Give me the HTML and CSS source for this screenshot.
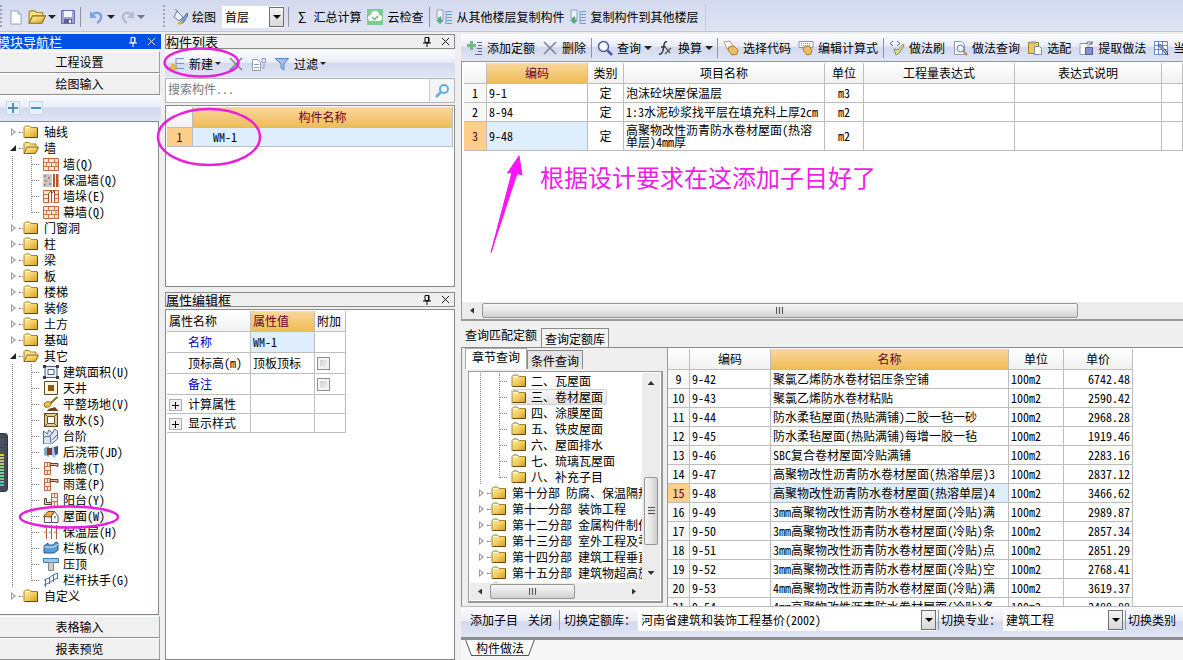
FILE: index.html
```html
<!DOCTYPE html>
<html lang="zh-CN">
<head>
<meta charset="utf-8">
<title>构件做法</title>
<link rel="stylesheet" href="styles.css">
</head>
<body>
<svg class="defs" aria-hidden="true">
  <defs>
    <linearGradient id="gold" x1="0" y1="0" x2="1" y2="1"><stop offset="0" stop-color="#fff3b0"/><stop offset=".5" stop-color="#f3cf62"/><stop offset="1" stop-color="#d49a1c"/></linearGradient>
    <linearGradient id="steel" x1="0" y1="0" x2="1" y2="1"><stop offset="0" stop-color="#fff"/><stop offset="1" stop-color="#7fa6d8"/></linearGradient>
  </defs>
  <symbol id="folder" viewBox="0 0 16 16"><path d="M1 3.500 2.500 2h4L8 3.500h6.500V13.500H1z" fill="url(#gold)" stroke="#a8842c"/><path d="M14.500 4v9.500H2" fill="none" stroke="#5e4a1c"/><path d="M3 3.500h4" stroke="#fff"/></symbol>
  <symbol id="folder-open" viewBox="0 0 16 16"><path d="M1 13V3.500L2 2.500h4L7.500 4H13v3" fill="#f9e08a" stroke="#a8842c"/><path d="M1 13.500 4 7h11.500L12.500 13.500z" fill="url(#gold)" stroke="#8a6a1a"/></symbol>
  <symbol id="brick" viewBox="0 0 16 16"><path d="M.5 2.500h15v12H.5z" fill="#fbe8dc" stroke="#c0673f"/><path d="M1 6.500h14M1 10.500h14M5.500 3v3.500M11.500 3v3.500M8.500 7v3.500M3.500 7v3.500M13 7v3.500M5.500 11v3.500M11.500 11v3.500" stroke="#c8764e" fill="none"/></symbol>
  <symbol id="brick-ins" viewBox="0 0 16 16"><path d="M0 2h9v13H0z" fill="#c9c4c8"/><path d="M1 3h2v2H1zm4 2h2v2H5zM2 8h2v2H2zm4 3h2v2H6zM1 12h2v2H1z" fill="#b8837c"/><path d="M10 2h2v13h-2zM13 2h2.500v13H13z" fill="#b8532b"/></symbol>
  <symbol id="brick-pier" viewBox="0 0 16 16"><path d="M.5 2.500h15v12H.5z" fill="#fbe8dc" stroke="#c0673f"/><path d="M1 6.500h4M1 10.500h4M12 6.500h3M12 10.500h3" stroke="#c8764e"/><path d="M5.500 14.500v-9l3-3v12M8.500 14.500v-9l3-3v12" fill="#fff" stroke="#a84a28"/></symbol>
  <symbol id="area" viewBox="0 0 16 16"><path d="M2 2.500h12v11H2z" fill="#e8effa" stroke="#4a5a78"/><path d="M5 5.500h6v5H5z" fill="#fff" stroke="#4a5a78"/><path d="M0 1h3v3H0zm13 0h3v3h-3zM0 12h3v3H0zm13 0h3v3h-3z" fill="#333b4c"/></symbol>
  <symbol id="court" viewBox="0 0 16 16"><path d="M1.500 1.500h13v13h-13z" fill="#fff5dc" stroke="#5c4a30"/><path d="M5 5h6v6H5z" fill="#8a5a12"/></symbol>
  <symbol id="shovel" viewBox="0 0 16 16"><path d="M14.500 1 7 7.500" stroke="#8a6a1a" stroke-width="2"/><path d="M1 8c2-3 5-3 7-1 1 3-3 5-6 4z" fill="#f0c24c" stroke="#8a6a1a"/><path d="M4 15c2-4 6-2 7-4 2 0 3 3 5 4z" fill="#6b3f1c"/></symbol>
  <symbol id="apron" viewBox="0 0 16 16"><path d="M1.500 1.500h13v13h-13z" fill="#e5c98e" stroke="#6b4a1e"/><path d="M4.500 4.500h7v7h-7z" fill="#fff" stroke="#6b4a1e"/><path d="m1 1 3 3M15 1l-3 3M1 15l3-3M15 15l-3-3" stroke="#6b4a1e"/></symbol>
  <symbol id="steps" viewBox="0 0 16 16"><path d="m.5 3 4 3 1-4 4 3 2-4 3 2v8l-6 5H.5z" fill="#dbe6f4" stroke="#5b7190"/><path d="m1 9 6-1 1 7M7 8l3-4M9 12l5-5" fill="none" stroke="#5b7190"/></symbol>
  <symbol id="strip" viewBox="0 0 16 16"><path d="m1 4 5-2v11l-5-2z" fill="#8fa6c0"/><path d="M8 3h7v7l-4 4-3-3z" fill="#a9c9e8"/><path d="M4 4h5v7H4z" fill="#7a3a34"/><path d="m11 3 4-1v8l-3 1z" fill="#3f4f86"/></symbol>
  <symbol id="eave" viewBox="0 0 16 16"><path d="M1.500 2.500h6v12h-6z" fill="#fbe8dc" stroke="#c0673f"/><path d="M1 6.500h6M1 10.500h6M4.500 3v3.500M4.500 11v3.500" stroke="#c8764e"/><path d="M7 3.500h8v3l-3-1H7z" fill="#d9c2ae" stroke="#5a4030"/></symbol>
  <symbol id="balcony" viewBox="0 0 16 16"><path d="M8.500 1.500h6v13h-6z" fill="#fbe8dc" stroke="#c0673f"/><path d="M9 5.500h6M9 9.500h6M11.500 2v3.500M11.500 10v4" stroke="#c8764e"/><path d="M1.500 6.500h2v4h5v2h-7z" fill="#e6cdb8" stroke="#5a4030"/></symbol>
  <symbol id="roof" viewBox="0 0 16 16"><path d="M.5 8.500 5 3.500h6.500L8 9z" fill="#f2a93b" stroke="#7a4a12"/><path d="M11.500 3.500 15 8v6.500H8.500V8z" fill="#fff" stroke="#555"/><path d="M1.500 9v5.500h7" fill="#fff" stroke="#555"/><path d="M12 8v2" stroke="#333"/></symbol>
  <symbol id="insul" viewBox="0 0 16 16"><path d="M3.500 1v14M8.500 1v14M13.500 1v14" stroke="#a8583a"/><path d="m1 4 3-2M1 9l3-2M6 4l3-2M6 9l3-2m2-3 3-2m-3 7 3-2" stroke="#e0653a"/></symbol>
  <symbol id="board" viewBox="0 0 16 16"><path d="m1 6 4-3v2h5l3-3 2 1v7l-4 3H1z" fill="#5b9bd8" stroke="#235a94"/><path d="M1 7h10l4-3" fill="none" stroke="#d8ebfa"/></symbol>
  <symbol id="coping" viewBox="0 0 16 16"><path d="M.5 2.500h15v4H.5z" fill="#9cc8ec" stroke="#3d7fb5"/><path d="M5.500 6.500h5v8h-5z" fill="#ccc" stroke="#888"/></symbol>
  <symbol id="rail" viewBox="0 0 16 16"><path d="m1 8 5-2 4-3 5-2M1 13l5-2 4-3 5-2M2.500 7v8M6.500 5v7M10.500 3v7M14.500 1v6" fill="none" stroke="#2f78c2"/></symbol>
  <symbol id="pin" viewBox="0 0 10 12"><path d="M3 1.500h4v5H3zM1 7h8M5 7v4M6.500 2v5" fill="none" stroke="currentColor"/></symbol>
  <symbol id="close" viewBox="0 0 10 10"><path d="m1 1 8 8M9 1 1 9" stroke="currentColor" fill="none"/></symbol>
  <symbol id="page" viewBox="0 0 16 16"><path d="M3 2h7l3 3v10H3z" fill="#fff" stroke="#97a4bb"/><path d="M10 2v3h3" fill="#dde4f0" stroke="#97a4bb"/></symbol>
  <symbol id="save" viewBox="0 0 16 16"><path d="M1.500 1.500h13v13h-13z" fill="#9fa3dc" stroke="#6a6db0"/><path d="M4 2h8v6H4z" fill="#f2f4ff"/><path d="M4 10h8v4H4z" fill="#5c6198"/><path d="M9 11h2v3H9z" fill="#fff"/></symbol>
  <symbol id="undo" viewBox="0 0 16 16"><path d="M3 6c4-4 10-2 9 3-.5 2-2 4-4 5" fill="none" stroke="currentColor" stroke-width="2.500"/><path d="M1 2v7h7z" fill="currentColor"/></symbol>
  <symbol id="brush" viewBox="0 0 16 16"><path d="m5 2 6 6-4 4-5-4z" fill="#eef3fb" stroke="#6f86aa"/><path d="M3 1c0-1 3 0 3 3" fill="none" stroke="#6f86aa"/><path d="m15 4-6 8-2 3 4-1 5-8z" fill="#7fa8e0" stroke="#48699c"/><path d="m5 14 5-2 1 2-4 2z" fill="#e2b23c"/></symbol>
  <symbol id="cloud" viewBox="0 0 16 16"><path d="M0 0h16v16H0z" fill="#7ccb94"/><path d="M4 12a3 3 0 0 1 0-6 4 4 0 0 1 8 0 3 3 0 0 1 0 6z" fill="#fff"/><path d="m5 8 2.500 2.500L11 7" fill="none" stroke="#5fb77c" stroke-width="1.500"/></symbol>
  <symbol id="floors" viewBox="0 0 16 16"><path d="M1 1h6v9H1z" fill="#eef1f6" stroke="#8fa0b8"/><path d="M10 2v13M10.500 2.500H16M10.500 5.500H16M10.500 8.500H16M10.500 11.500H16M10.500 14.500H16" stroke="#6f9ad0"/><path d="M5 7v4h3l-4 4-4-4h2V9z" fill="#58a878"/></symbol>
  <symbol id="addlist" viewBox="0 0 16 16"><path d="M3 1h3v3h3v3H6v3H3V7H0V4h3z" fill="#76b982"/><path d="M10 2.500h5M11 5.500h4M10 8.500h5M11 11.500h4M8 14.500h7" stroke="#596b86"/></symbol>
  <symbol id="newlist" viewBox="0 0 16 16"><path d="M7 2v12M7 2.500h8M7 7.500h8M7 12.500h8" stroke="#7896c4"/><path d="M3 8h2v3h3v2H5v3H3v-3H0v-2h3z" fill="#f4c534" stroke="#b98b18" stroke-width=".5"/></symbol>
  <symbol id="cross" viewBox="0 0 16 16"><path d="m2 2 12 12M14 2 2 14" stroke="#7d838e" stroke-width="1.500"/></symbol>
  <symbol id="copy" viewBox="0 0 16 16"><path d="M1.500 3.500h5l3 3v8h-8z" fill="#fff" stroke="#8b9ab2"/><path d="M3 8.500h5M3 11.500h5M11 2.500h3.500v4H11zM13 8v4h-2" fill="none" stroke="#8b9ab2"/></symbol>
  <symbol id="funnel" viewBox="0 0 16 16"><path d="M1.500 2.500h13L10 8v6l-3-2V8z" fill="#9cc0ec" stroke="#5585c2"/></symbol>
  <symbol id="lens" viewBox="0 0 16 16"><circle cx="6.500" cy="6.500" r="5" fill="#f6faff" stroke="#4a5aa0" stroke-width="1.500"/><path d="m10.500 10.500 4.500 4.500" stroke="#4a5aa0" stroke-width="2.500"/></symbol>
  <symbol id="find" viewBox="0 0 16 16"><circle cx="10" cy="6" r="4" fill="none" stroke="#62aee0" stroke-width="2"/><path d="m7 9-5 5" stroke="#62aee0" stroke-width="2.500"/></symbol>
  <symbol id="fx" viewBox="0 0 16 16"><path d="M9 2C6 1 6 5 5.500 8S4 15 1 14M3 7h5" fill="none" stroke="#333" stroke-width="1.500"/><path d="m8 8 4 5M13 8l-6 6" stroke="#555" stroke-width="1.300"/></symbol>
  <symbol id="hand" viewBox="0 0 16 16"><path d="m1 2 6-1 3 5-6 3z" fill="#fff" stroke="#c98d7c"/><path d="m6 7 5-1 4 4-1 4-5 1-4-5z" fill="#eebf6a" stroke="#a97a2c"/></symbol>
  <symbol id="calc" viewBox="0 0 16 16"><path d="M1 1.500h14v6H1z" fill="#fff" stroke="#8c93a2"/><path d="M3 3.500h10M3 5.500h10" stroke="#8c93a2" stroke-dasharray="1 1"/><path d="m6 7 5-1 3 4-1 4-4 1-4-5z" fill="#eebf6a" stroke="#a97a2c"/></symbol>
  <symbol id="codebrush" viewBox="0 0 16 16"><path d="M4 1 1 3.500 4 6M8 1l3 2.500L8 6" fill="none" stroke="#56647e"/><path d="m5 9 4 1 5-6 1 2-5 7-3 2z" fill="#e2df9a" stroke="#8b8d54"/></symbol>
  <symbol id="pagefind" viewBox="0 0 16 16"><path d="M2.500 1.500h7l3 3v10h-10z" fill="#fff" stroke="#8b9ab2"/><circle cx="8.500" cy="8.500" r="3.500" fill="#e6f2fc" stroke="#5f7fae"/><path d="m11 11 4 4" stroke="#c28a3a" stroke-width="2"/></symbol>
  <symbol id="paste" viewBox="0 0 16 16"><path d="M1.500 2.500h10v11h-10z" fill="#f0c862" stroke="#a07a28"/><path d="M4 1h5v3H4z" fill="#a9b0bd"/><path d="M7.500 6.500h5l2 2v6h-7z" fill="#fff" stroke="#7d8ea8"/></symbol>
  <symbol id="extract" viewBox="0 0 16 16"><path d="M2 3.500h8v11H2z" fill="#fff" stroke="#8b9ab2"/><path d="M7.500 7.500h7v7h-7z" fill="#8a8fd0" stroke="#55589c"/><path d="M8 4c1-3 4-3 6 0M14 1v3h-3" fill="none" stroke="#4c5a80"/></symbol>
  <symbol id="gridpen" viewBox="0 0 16 16"><path d="M1.500 1.500h13v13h-13zM1 5.500h13M1 9.500h13M5.500 1v13M9.500 1v13" fill="#fff" stroke="#6c88c4"/><path d="m5 5 8 9 2 1-1-3-7-8z" fill="#9fb3dc" stroke="#46598c"/></symbol>
</svg>

<div class="app">
  <header class="bar bar--top">
    <span class="grip"></span>
    <button class="tool tool--icon" aria-label="新建文件"><svg class="ico"><use href="#page"/></svg></button>
    <button class="tool tool--icon" aria-label="打开"><svg class="ico ico--lg"><use href="#folder-open"/></svg><i class="caret"></i></button>
    <button class="tool tool--icon" aria-label="保存"><svg class="ico"><use href="#save"/></svg></button>
    <span class="sep"></span>
    <button class="tool tool--icon tool--undo" aria-label="撤销"><svg class="ico"><use href="#undo"/></svg><i class="caret"></i></button>
    <button class="tool tool--icon tool--redo" aria-label="重做"><svg class="ico flip"><use href="#undo"/></svg><i class="caret"></i></button>
    <span class="grip grip--mid"></span>
    <button class="tool"><svg class="ico"><use href="#brush"/></svg>绘图</button>
    <span class="combo combo--floor"><select aria-label="楼层"><option>首层</option></select></span>
    <span class="sep"></span>
    <button class="tool"><span class="sigma">Σ</span>汇总计算</button>
    <button class="tool"><svg class="ico"><use href="#cloud"/></svg>云检查</button>
    <span class="sep"></span>
    <button class="tool"><svg class="ico"><use href="#floors"/></svg>从其他楼层复制构件</button>
    <button class="tool"><svg class="ico"><use href="#floors"/></svg>复制构件到其他楼层</button>
    <span class="bar-end"></span>
  </header>

  <div class="work">
    <nav class="nav">
      <h2 class="title title--active"><span>模块导航栏</span><svg class="pin"><use href="#pin"/></svg><svg class="x"><use href="#close"/></svg></h2>
      <button class="section">工程设置</button>
      <button class="section">绘图输入</button>
      <div class="bar bar--nav"><button class="sq plus" aria-label="展开"></button><button class="sq" aria-label="折叠"></button></div>
      <ul class="tree tree--nav">
        <li class="shut"><span class="row"><svg class="ico"><use href="#folder"/></svg>轴线</span></li>
        <li class="open"><span class="row"><svg class="ico"><use href="#folder-open"/></svg>墙</span>
          <ul class="kids">
            <li><svg class="ico"><use href="#brick"/></svg>墙(Q)</li>
            <li><svg class="ico"><use href="#brick-ins"/></svg>保温墙(Q)</li>
            <li><svg class="ico"><use href="#brick-pier"/></svg>墙垛(E)</li>
            <li><svg class="ico"><use href="#brick"/></svg>幕墙(Q)</li>
          </ul></li>
        <li class="shut"><span class="row"><svg class="ico"><use href="#folder"/></svg>门窗洞</span></li>
        <li class="shut"><span class="row"><svg class="ico"><use href="#folder"/></svg>柱</span></li>
        <li class="shut"><span class="row"><svg class="ico"><use href="#folder"/></svg>梁</span></li>
        <li class="shut"><span class="row"><svg class="ico"><use href="#folder"/></svg>板</span></li>
        <li class="shut"><span class="row"><svg class="ico"><use href="#folder"/></svg>楼梯</span></li>
        <li class="shut"><span class="row"><svg class="ico"><use href="#folder"/></svg>装修</span></li>
        <li class="shut"><span class="row"><svg class="ico"><use href="#folder"/></svg>土方</span></li>
        <li class="shut"><span class="row"><svg class="ico"><use href="#folder"/></svg>基础</span></li>
        <li class="open"><span class="row"><svg class="ico"><use href="#folder-open"/></svg>其它</span>
          <ul class="kids">
            <li><svg class="ico"><use href="#area"/></svg>建筑面积(U)</li>
            <li><svg class="ico"><use href="#court"/></svg>天井</li>
            <li><svg class="ico"><use href="#shovel"/></svg>平整场地(V)</li>
            <li><svg class="ico"><use href="#apron"/></svg>散水(S)</li>
            <li><svg class="ico"><use href="#steps"/></svg>台阶</li>
            <li><svg class="ico"><use href="#strip"/></svg>后浇带(JD)</li>
            <li><svg class="ico"><use href="#eave"/></svg>挑檐(T)</li>
            <li><svg class="ico"><use href="#eave"/></svg>雨蓬(P)</li>
            <li><svg class="ico"><use href="#balcony"/></svg>阳台(Y)</li>
            <li><span class="picked"><svg class="ico"><use href="#roof"/></svg>屋面(W)</span></li>
            <li><svg class="ico"><use href="#insul"/></svg>保温层(H)</li>
            <li><svg class="ico"><use href="#board"/></svg>栏板(K)</li>
            <li><svg class="ico"><use href="#coping"/></svg>压顶</li>
            <li><svg class="ico"><use href="#rail"/></svg>栏杆扶手(G)</li>
          </ul></li>
        <li class="shut"><span class="row"><svg class="ico"><use href="#folder"/></svg>自定义</span></li>
      </ul>
      <button class="section">表格输入</button>
      <button class="section">报表预览</button>
    </nav>

    <section class="middle">
      <div class="pane pane--list">
        <h2 class="title"><span>构件列表</span><svg class="pin"><use href="#pin"/></svg><svg class="x"><use href="#close"/></svg></h2>
        <div class="bar bar--list">
          <button class="tool"><svg class="ico"><use href="#newlist"/></svg>新建<i class="caret caret--sm"></i></button>
          <button class="tool tool--icon" aria-label="删除构件"><svg class="ico"><use href="#cross"/></svg></button>
          <button class="tool tool--icon" aria-label="复制构件"><svg class="ico"><use href="#copy"/></svg></button>
          <button class="tool"><svg class="ico"><use href="#funnel"/></svg>过滤<i class="caret caret--sm"></i></button>
        </div>
        <div class="search"><input type="text" placeholder="搜索构件..." aria-label="搜索构件"><button aria-label="搜索"><svg class="ico"><use href="#find"/></svg></button></div>
        <div class="box">
          <table class="grid grid--list">
            <colgroup><col class="w26"><col></colgroup>
            <tr><th></th><th class="hot">构件名称</th></tr>
            <tr><th class="mark">1</th><td class="sel indent">WM-1</td></tr>
          </table>
        </div>
      </div>
      <div class="pane pane--props">
        <h2 class="title"><span>属性编辑框</span><svg class="pin"><use href="#pin"/></svg><svg class="x"><use href="#close"/></svg></h2>
        <div class="box">
          <table class="grid grid--props">
            <colgroup><col class="w84"><col class="w64"><col class="w31"></colgroup>
            <tr><th>属性名称</th><th class="hot">属性值</th><th>附加</th></tr>
            <tr class="tall"><td class="key link">名称</td><td class="sel">WM-1</td><td></td></tr>
            <tr class="tall"><td class="key">顶标高(m)</td><td>顶板顶标</td><td><input type="checkbox" aria-label="顶标高附加"></td></tr>
            <tr class="tall"><td class="key link">备注</td><td></td><td><input type="checkbox" aria-label="备注附加"></td></tr>
            <tr><td><button class="expand" aria-label="展开计算属性"></button>计算属性</td><td></td><td></td></tr>
            <tr><td><button class="expand" aria-label="展开显示样式"></button>显示样式</td><td></td><td></td></tr>
          </table>
        </div>
      </div>
    </section>

    <main class="main">
      <section class="upper">
        <div class="bar bar--main">
          <button class="tool"><svg class="ico"><use href="#addlist"/></svg>添加定额</button>
          <button class="tool"><svg class="ico"><use href="#cross"/></svg>删除</button>
          <span class="sep"></span>
          <button class="tool"><svg class="ico"><use href="#lens"/></svg>查询<i class="caret"></i></button>
          <button class="tool"><svg class="ico"><use href="#fx"/></svg>换算<i class="caret"></i></button>
          <span class="sep"></span>
          <button class="tool"><svg class="ico"><use href="#hand"/></svg>选择代码</button>
          <button class="tool"><svg class="ico"><use href="#calc"/></svg>编辑计算式</button>
          <span class="sep"></span>
          <button class="tool"><svg class="ico"><use href="#codebrush"/></svg>做法刷</button>
          <button class="tool"><svg class="ico"><use href="#pagefind"/></svg>做法查询</button>
          <button class="tool"><svg class="ico"><use href="#paste"/></svg>选配</button>
          <button class="tool"><svg class="ico"><use href="#extract"/></svg>提取做法</button>
          <button class="tool"><svg class="ico"><use href="#gridpen"/></svg>当</button>
        </div>
        <div class="sheet">
          <table class="grid grid--quota">
            <colgroup><col class="w23"><col class="w101"><col class="w36"><col class="w201"><col class="w39"><col class="w151"><col class="w147"><col></colgroup>
            <tr><th></th><th class="hot">编码</th><th>类别</th><th>项目名称</th><th>单位</th><th>工程量表达式</th><th>表达式说明</th><th></th></tr>
            <tr><th class="num">1</th><td>9-1</td><td class="mid">定</td><td>泡沫砼块屋保温层</td><td class="mid">m3</td><td></td><td></td><td></td></tr>
            <tr><th class="num">2</th><td>8-94</td><td class="mid">定</td><td>1:3水泥砂浆找平层在填充料上厚2cm</td><td class="mid">m2</td><td></td><td></td><td></td></tr>
            <tr class="double"><th class="mark">3</th><td class="sel">9-48</td><td class="mid">定</td><td class="wrap">高聚物改性沥青防水卷材屋面(热溶<br>单层)4mm厚</td><td class="mid">m2</td><td></td><td></td><td></td></tr>
          </table>
        </div>
        <div class="hscroll"><i class="arrow arrow--l"></i><div class="lane"><div class="thumb thumb--wide"></div></div></div>
      </section>

      <section class="lower">
        <div class="tabs tabs--outer"><button class="tab tab--on">查询匹配定额</button><button class="tab">查询定额库</button></div>
        <div class="query">
          <div class="chapters">
            <div class="tabs tabs--inner"><button class="tab tab--on">章节查询</button><button class="tab">条件查询</button></div>
            <div class="treebox">
              <div class="view">
                <ul class="tree tree--chapters">
                  <li class="open"><ul class="kids">
                    <li><svg class="ico"><use href="#folder"/></svg>二、瓦屋面</li>
                    <li><span class="picked picked--strong"><svg class="ico"><use href="#folder"/></svg>三、卷材屋面</span></li>
                    <li><svg class="ico"><use href="#folder"/></svg>四、涂膜屋面</li>
                    <li><svg class="ico"><use href="#folder"/></svg>五、铁皮屋面</li>
                    <li><svg class="ico"><use href="#folder"/></svg>六、屋面排水</li>
                    <li><svg class="ico"><use href="#folder"/></svg>七、琉璃瓦屋面</li>
                    <li><svg class="ico"><use href="#folder"/></svg>八、补充子目</li>
                  </ul></li>
                  <li class="shut"><span class="row"><svg class="ico"><use href="#folder"/></svg>第十分部 防腐、保温隔热</span></li>
                  <li class="shut"><span class="row"><svg class="ico"><use href="#folder"/></svg>第十一分部 装饰工程</span></li>
                  <li class="shut"><span class="row"><svg class="ico"><use href="#folder"/></svg>第十二分部 金属构件制作</span></li>
                  <li class="shut"><span class="row"><svg class="ico"><use href="#folder"/></svg>第十三分部 室外工程及零</span></li>
                  <li class="shut"><span class="row"><svg class="ico"><use href="#folder"/></svg>第十四分部 建筑工程垂直</span></li>
                  <li class="shut"><span class="row"><svg class="ico"><use href="#folder"/></svg>第十五分部 建筑物超高施</span></li>
                  <li class="shut"><span class="row"><svg class="ico"><use href="#folder"/></svg>第十六分部 其他措施项目</span></li>
                </ul>
                <div class="vscroll"><i class="arrow arrow--u"></i><div class="lane"><div class="thumb"></div></div><i class="arrow arrow--d"></i></div>
              </div>
              <div class="hscroll hscroll--tree"><i class="arrow arrow--l"></i><div class="lane"><div class="thumb"></div></div><i class="arrow arrow--r"></i></div>
            </div>
          </div>
          <div class="results">
            <table class="grid grid--results">
              <colgroup><col class="w22"><col class="w81"><col class="w238"><col class="w55"><col class="w69"></colgroup>
              <tr><th></th><th>编码</th><th class="hot">名称</th><th>单位</th><th>单价</th></tr>
              <tr><th class="num">9</th><td>9-42</td><td>聚氯乙烯防水卷材铝压条空铺</td><td>100m2</td><td class="money">6742.48</td></tr>
              <tr><th class="num">10</th><td>9-43</td><td>聚氯乙烯防水卷材粘贴</td><td>100m2</td><td class="money">2590.42</td></tr>
              <tr><th class="num">11</th><td>9-44</td><td>防水柔毡屋面(热贴满铺)二胶一毡一砂</td><td>100m2</td><td class="money">2968.28</td></tr>
              <tr><th class="num">12</th><td>9-45</td><td>防水柔毡屋面(热贴满铺)每增一胶一毡</td><td>100m2</td><td class="money">1919.46</td></tr>
              <tr><th class="num">13</th><td>9-46</td><td>SBC复合卷材屋面冷贴满铺</td><td>100m2</td><td class="money">2283.16</td></tr>
              <tr><th class="num">14</th><td>9-47</td><td>高聚物改性沥青防水卷材屋面(热溶单层)3</td><td>100m2</td><td class="money">2837.12</td></tr>
              <tr><th class="mark">15</th><td>9-48</td><td class="sel">高聚物改性沥青防水卷材屋面(热溶单层)4</td><td>100m2</td><td class="money">3466.62</td></tr>
              <tr><th class="num">16</th><td>9-49</td><td>3mm高聚物改性沥青防水卷材屋面(冷贴)满</td><td>100m2</td><td class="money">2989.87</td></tr>
              <tr><th class="num">17</th><td>9-50</td><td>3mm高聚物改性沥青防水卷材屋面(冷贴)条</td><td>100m2</td><td class="money">2857.34</td></tr>
              <tr><th class="num">18</th><td>9-51</td><td>3mm高聚物改性沥青防水卷材屋面(冷贴)点</td><td>100m2</td><td class="money">2851.29</td></tr>
              <tr><th class="num">19</th><td>9-52</td><td>3mm高聚物改性沥青防水卷材屋面(冷贴)空</td><td>100m2</td><td class="money">2768.41</td></tr>
              <tr><th class="num">20</th><td>9-53</td><td>4mm高聚物改性沥青防水卷材屋面(冷贴)满</td><td>100m2</td><td class="money">3619.37</td></tr>
              <tr><th class="num">21</th><td>9-54</td><td>4mm高聚物改性沥青防水卷材屋面(冷贴)条</td><td>100m2</td><td class="money">3488.88</td></tr>
            </table>
          </div>
        </div>
        <div class="bar bar--query">
          <button class="tool">添加子目</button>
          <button class="tool">关闭</button>
          <span class="sep"></span>
          <label for="library">切换定额库：</label>
          <span class="combo combo--library"><select id="library"><option>河南省建筑和装饰工程基价(2002)</option></select></span>
          <span class="sep"></span>
          <label for="trade">切换专业：</label>
          <span class="combo combo--trade"><select id="trade"><option>建筑工程</option></select></span>
          <span class="sep"></span>
          <span>切换类别</span>
        </div>
      </section>
      <footer class="foot"><button class="sheet-tab">构件做法</button></footer>
    </main>
  </div>

  <div class="meter"></div>
  <svg class="marks" width="1183" height="660" aria-hidden="true">
    <g fill="none" stroke="#e81fdc" stroke-width="2.500">
      <ellipse cx="201.500" cy="62.500" rx="37" ry="14"/>
      <ellipse cx="209" cy="137" rx="51" ry="28"/>
      <ellipse cx="69" cy="517" rx="49" ry="10.500"/>
    </g>
    <path d="M519 156 522 175 517 173.500 491 252.500 512 172.500 507.500 173z" fill="#fa14fa" stroke="#fa14fa" stroke-linejoin="round"/>
  </svg>
  <p class="note">根据设计要求在这添加子目好了</p>
</div>
</body>
</html>
```
FILE: styles.css
```css
* { box-sizing: border-box; }

body {
  margin: 0;
  background: #efefef;
  color: #000;
  font: 12px/16px "Noto Sans Mono CJK SC", "Noto Sans CJK SC", sans-serif;
}

button, input, select { font: inherit; color: inherit; margin: 0; padding: 0; border: 0; background: none; }
ul { list-style: none; margin: 0; padding: 0; }
.defs { position: absolute; width: 0; height: 0; }

.app { position: relative; display: flex; flex-direction: column; height: 100vh; overflow: hidden; }
.ico { width: 16px; height: 16px; flex: none; }
.ico--lg { width: 18px; height: 18px; }
.flip { transform: scaleX(-1); }

/* toolbars */
.bar {
  display: flex;
  flex: none;
  align-items: center;
  gap: 7px;
  overflow: hidden;
  white-space: nowrap;
  background: linear-gradient(#fdfdff, #e9edf8 45%, #d3daee 50%, #dfe5f5);
}
.bar--top { height: 32px; gap: 6px; padding-top: 3px; background: linear-gradient(#d3daee, #e0e4f3); border-bottom: 1px solid #c3c5cc; }
.tool { display: flex; align-items: center; gap: 4px; flex: none; }
.bar--top .tool--icon { gap: 2px; margin-right: -2px; }
.tool--undo { color: #7da3dc; margin-left: 2px; }
.tool--redo { color: #b4bccd; }
.caret { border: 4px solid transparent; border-top-color: #222; border-bottom: 0; }
.caret--sm { border-width: 3px 3px 0; margin-left: -2px; }
.tool--redo .caret { border-top-color: #777; }
.sep { width: 1px; height: 20px; flex: none; background: #8e94a5; }
.grip { width: 2px; height: 24px; flex: none; background: repeating-linear-gradient(#9da4b8 0 2px, transparent 2px 4px); }
.grip--mid { margin: 0 1px 0 14px; }
.bar-end { width: 1px; height: 26px; background: #c6cad8; }
.sigma { font-size: 14px; padding: 0 3px; }

.combo { position: relative; display: flex; height: 22px; background: #fff; flex: none; }
.combo select { appearance: none; width: 100%; padding: 0 16px 0 3px; outline: 0; }
.combo::before { content: ""; position: absolute; right: 0; top: 1px; bottom: 1px; width: 13px; border: 1px solid #707070; background: linear-gradient(#f4f4f4, #d8d8d8); pointer-events: none; }
.combo::after { content: ""; position: absolute; right: 3px; top: 9px; border: 4px solid transparent; border-top-color: #000; border-bottom: 0; pointer-events: none; }
.combo--floor { width: 62px; }
.combo--floor + .sep { margin-left: -2px; }
.combo--library { width: 298px; }
.combo--trade { width: 120px; }

/* three columns */
.work { display: flex; flex: 1; min-height: 0; padding-top: 2px; gap: 4px; }
.nav { display: flex; flex-direction: column; width: 161px; flex: none; background: #efefef; }
.middle { display: flex; flex-direction: column; gap: 5px; width: 290px; flex: none; }
.main { display: flex; flex-direction: column; flex: 1; min-width: 0; margin-left: 2px; }

.title {
  display: flex;
  flex: none;
  align-items: center;
  height: 15px;
  margin: 0;
  padding-right: 4px;
  border: 1px solid #8a8a8a;
  font-size: 13px;
  font-weight: 400;
  line-height: 15px;
}
.title span { flex: 1; white-space: nowrap; }
.title .pin { width: 10px; height: 12px; margin-right: 9px; }
.title .x { width: 9px; height: 9px; }
.title--active { background: #0050e8; border-color: #0050e8; color: #fff; }
.title--active span { margin-left: -4px; }

.section { height: 22px; flex: none; border-bottom: 1px solid #8f8f8f; border-right: 1px solid #a0a0a0; border-top: 1px solid #fff; margin-right: 1px; line-height: 18px; background: #f0f0f0; }
.title--active + .section { margin-top: 2px; }
.bar--nav { height: 26px; gap: 8px; padding: 0 6px; }
.sq { position: relative; width: 14px; height: 14px; margin-right: 1px; background: #e9f1fb; border: 1px solid #c9d6ea; }
.sq::before { content: ""; position: absolute; left: 1px; top: 5px; width: 10px; height: 2px; background: #4a90c4; }
.plus::after { content: ""; position: absolute; left: 5px; top: 1px; width: 2px; height: 10px; background: #4a90c4; }

/* trees */
.tree { background: #fff; white-space: nowrap; overflow: hidden; }
.tree--nav { flex: 1; min-height: 0; padding-top: 2px; margin-right: 2px; border: 1px solid #7f8a99; border-left: 0; margin-bottom: 1px; }
.tree > li { position: relative; }
.row { display: flex; align-items: center; gap: 5px; height: 16px; padding-left: 23px; }
.shut > .row::before { content: ""; position: absolute; left: 11px; width: 5px; height: 8px; background: #999; clip-path: polygon(0 0, 100% 50%, 0 100%, 0 0, 1px 2px, 1px 6px, 3px 4px, 1px 2px); }
.open > .row::before { content: ""; position: absolute; left: 10px; width: 6px; height: 6px; background: #222; clip-path: polygon(100% 0, 100% 100%, 0 100%); }
.row::after { content: ""; position: absolute; left: 19px; top: 8px; width: 4px; border-top: 1px dotted #888; }
.kids { margin-left: 12px; padding-left: 19px; background: repeating-linear-gradient(#888 0 1px, transparent 1px 2px) 0 0 / 1px 100% no-repeat; }
.kids li { display: flex; align-items: center; gap: 4px; height: 16px; background: repeating-linear-gradient(#888 0 1px, transparent 1px 2px) 0 0 / 1px 100% no-repeat; }
.kids li:last-child { background-size: 1px 8px; }
.kids li::before { content: ""; width: 8px; border-top: 1px dotted #888; }
.picked { display: flex; gap: 4px; padding-right: 4px; background: #f1f1f1; border-radius: 2px; }
.picked--strong { background: linear-gradient(#fafafa, #e2e2e2); outline: 1px solid #d0d0d0; outline-offset: -1px; }

/* component list and properties */
.pane { display: flex; flex-direction: column; min-height: 0; }
.pane--list { flex: 253 1 0; }
.pane--props { flex: 368 1 0; }
.bar--list { height: 27px; margin-top: 1px; padding-left: 4px; gap: 7px; }
.search { display: flex; flex: none; height: 25px; margin: 1px 0 2px; border: 1px solid #b5b5b5; background: #f4f4f4; }
.search input { flex: 1; min-width: 0; padding: 0 2px 4px; background: #fff; border-right: 1px solid #ccc; }
.search input::placeholder { color: #777; opacity: 1; }
.search button { display: grid; place-items: center; width: 24px; }
.box { flex: 1; min-height: 0; overflow: hidden; padding: 1px; background: #fff; border: 1px solid #8a8a8a; }
.pane--props .box { margin-top: 2px; }

.grid { border-spacing: 0; table-layout: fixed; white-space: nowrap; }
.grid th, .grid td { height: 19px; padding: 0 2px; border-right: 1px solid #bdbdbd; border-bottom: 1px solid #bdbdbd; overflow: hidden; text-align: left; font-weight: 400; line-height: 16px; }
.grid tr:first-child th { height: 21px; text-align: center; background: linear-gradient(#fff, #f1f1f1); }
.grid tr:first-child .hot { background: linear-gradient(#f9d79c, #efbd57); color: #6a0032; }
.grid .num { text-align: center; background: #f8f8f8; }
.grid .mark { text-align: center; background: #fdcf88; color: #6a0032; }
.grid .sel { background: #dfeefd; }
.grid .mid { text-align: center; }
.grid .indent { padding-left: 20px; }
.grid .money { text-align: right; }
.grid .double td { height: 29px; }
.grid .wrap { line-height: 12px; }
.grid .tall td { height: 21px; }
.grid .key { padding-left: 21px; }
.grid .link { color: #0000cd; }
.grid--list, .grid--quota { width: 100%; }
.grid--props { width: 179px; }
.grid--props tr:first-child th { text-align: left; }
.grid--results { width: 465px; }
.w22 { width: 22px; } .w23 { width: 23px; } .w26 { width: 26px; } .w31 { width: 31px; } .w36 { width: 36px; }
.w39 { width: 39px; } .w55 { width: 55px; } .w64 { width: 64px; } .w69 { width: 69px; } .w81 { width: 81px; }
.w84 { width: 84px; } .w101 { width: 101px; } .w147 { width: 147px; } .w151 { width: 151px; } .w201 { width: 201px; } .w238 { width: 238px; }

input[type="checkbox"] { appearance: none; display: block; width: 13px; height: 13px; border: 1px solid #8e8f8f; background: linear-gradient(135deg, #c6c9cc, #f6f6f6); box-shadow: inset 0 0 0 2px #f4f4f4; }
.expand { width: 13px; height: 12px; margin: 0 6px 0 0; border: 1px solid #b0b0b0; vertical-align: -1px; background: linear-gradient(#000, #000) center / 7px 1px no-repeat, linear-gradient(#000, #000) center / 1px 7px no-repeat, #eee; }

/* quota sheet */
.upper { display: flex; flex-direction: column; flex: 287 1 0; min-height: 0; border-bottom: 2px solid #999; }
.bar--main { height: 27px; padding-left: 6px; }
.bar--main .sep { margin: 0 -2px; }
.bar--main .caret { margin: 0 -1px; }
.sheet { flex: 1; min-height: 0; padding: 1px 0 0 2px; overflow: hidden; background: #fff; border-top: 1px solid #999; border-left: 1px solid #999; }

.hscroll { display: flex; flex: none; align-items: center; height: 17px; padding: 0 8px; gap: 8px; background: #ececec; border-left: 1px solid #999; }
.lane { flex: 1; }
.hscroll .thumb { display: grid; place-items: center; width: 85px; height: 15px; border: 1px solid #979797; border-radius: 2px; background: linear-gradient(#f5f5f5, #e6e6e6 50%, #cfcfcf); }
.hscroll .thumb::before { content: ""; width: 8px; height: 7px; background: repeating-linear-gradient(90deg, #555 0 1px, #ddd 1px 3px); }
.hscroll .thumb--wide { width: 86%; }
.arrow { flex: none; width: 4px; height: 6px; background: #333; }
.arrow--l { clip-path: polygon(0 50%, 100% 0, 100% 100%); }
.arrow--r { clip-path: polygon(100% 50%, 0 0, 0 100%); }
.arrow--u { width: 7px; height: 4px; clip-path: polygon(50% 0, 100% 100%, 0 100%); }
.arrow--d { width: 7px; height: 4px; clip-path: polygon(50% 100%, 100% 0, 0 0); }

/* query area */
.lower { display: flex; flex-direction: column; flex: 318 1 0; min-height: 0; border-bottom: 3px solid #8c8c8c; }
.tabs { display: flex; flex: none; align-items: flex-end; }
.tab { height: 19px; padding: 0 3px; line-height: 17px; border: 1px solid #8a8a8a; border-bottom: 0; background: #f0f0f0; }
.tabs .tab--on { display: flex; align-items: flex-start; height: 21px; line-height: 16px; }
.tabs--outer { height: 26px; }
.tabs--outer .tab--on { border-color: transparent; }
.tabs--outer .tab:last-child { background: #f4f4f4; }
.query { display: flex; flex: 1; min-height: 0; border-top: 1px solid #8a8a8a; border-left: 1px solid #8a8a8a; background: #fff; }
.chapters { display: flex; flex-direction: column; width: 205px; flex: none; padding: 0 4px 3px 3px; background: #efefef; }
.tabs--inner { height: 21px; }
.tabs--inner .tab { background: #e4e4e4; }
.tabs--inner .tab--on { padding: 0 6px; background: #fff; border-color: #aaa; }
.treebox { display: flex; flex-direction: column; flex: 1; min-height: 0; margin-left: 3px; padding: 1px; margin-top: 2px; background: #fff; border: 1px solid #999; border-width: 1px 2px 2px 1px; }
.view { display: flex; flex: 1; min-height: 0; }
.tree--chapters { flex: 1; min-width: 0; }
.tree--chapters .row { padding-left: 21px; }
.tree--chapters .shut > .row::before { left: 9px; }
.tree--chapters .row::after { left: 17px; }
.tree--chapters .kids { margin-left: 10px; }
.vscroll { display: flex; flex-direction: column; align-items: center; gap: 6px; width: 18px; padding: 8px 0; background: #ececec; }
.vscroll .lane { display: flex; flex-direction: column; justify-content: flex-end; padding-bottom: 20px; }
.vscroll .thumb { display: grid; place-items: center; width: 14px; height: 68px; border: 1px solid #979797; border-radius: 2px; background: linear-gradient(90deg, #f5f5f5, #e6e6e6 50%, #cfcfcf); }
.vscroll .thumb::before { content: ""; width: 7px; height: 8px; background: repeating-linear-gradient(#555 0 1px, #ddd 1px 3px); }
.hscroll--tree { padding-right: 24px; border: 0; }
.results { flex: 1; min-width: 0; overflow: hidden; border-left: 1px solid #999; padding-top: 1px; }
.bar--query { height: 31px; padding: 0 0 4px 9px; gap: 2px; border-top: 1px solid #bbb; }
.bar--query .tool { margin-right: 8px; }
.bar--query .tool + .sep { margin: 0 2px 0 -3px; }

.foot { flex: none; height: 20px; padding-left: 10px; background: #f6f6f6; }
.sheet-tab { position: relative; display: block; height: 16px; padding: 0 5px; line-height: 14px; background: #fff; border-bottom: 1px solid #555; }
.sheet-tab::before, .sheet-tab::after { content: ""; position: absolute; top: 0; bottom: 0; width: 4px; background: #fff; }
.sheet-tab::before { left: -3px; border-left: 1px solid #555; transform: skewX(20deg); }
.sheet-tab::after { right: -3px; border-right: 1px solid #555; transform: skewX(-20deg); }

/* overlays */
.meter { position: absolute; left: 0; top: 433px; width: 8px; height: 59px; border-radius: 0 4px 4px 0; border: 1px solid #30343f; border-left: 0; background: repeating-linear-gradient(transparent 0 2px, #454a59 2px 3px) 0 5px / 4px 48px no-repeat, linear-gradient(#4d5468 30%, #e8c84a 32%, #8fcf7a 60%, #3fc6b8) 0 5px / 4px 48px no-repeat, #454a59; }
.marks { position: absolute; left: 0; top: 0; pointer-events: none; }
.note { position: absolute; left: 540px; top: 161px; margin: 0; font-size: 24px; font-weight: 300; line-height: 32px; color: #f01ce8; white-space: nowrap; pointer-events: none; }
```
